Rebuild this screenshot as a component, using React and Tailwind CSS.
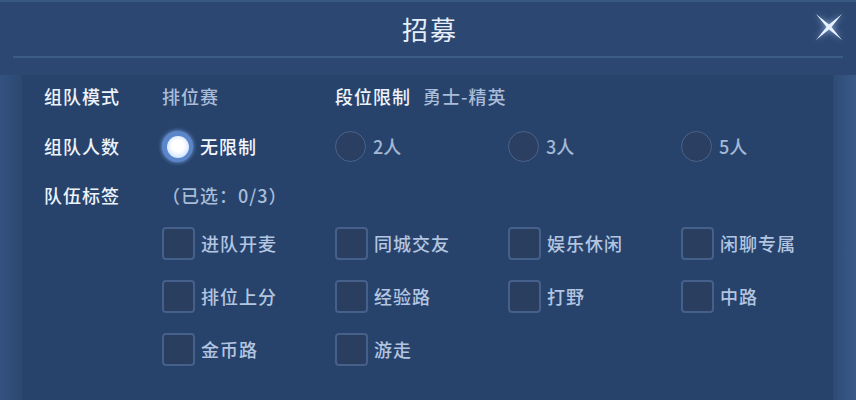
import { useState } from "react";

const tags = [
  ["进队开麦", "同城交友", "娱乐休闲", "闲聊专属"],
  ["排位上分", "经验路", "打野", "中路"],
  ["金币路", "游走"],
];

const sizes = ["无限制", "2人", "3人", "5人"];

function CloseStar() {
  // four-point glowing cross
  return (
    <svg width="30" height="30" viewBox="0 0 30 30" className="drop-shadow-[0_0_3px_rgba(180,210,255,0.8)]">
      <polygon points="2,2 15,12.5 28,2 17.5,15 28,28 15,17.5 2,28 12.5,15" fill="#e8f1ff" />
    </svg>
  );
}

function Radio({ checked }) {
  if (checked) {
    return (
      <span className="flex h-[31px] w-[31px] shrink-0 items-center justify-center rounded-full bg-[#5b86c9] shadow-[0_0_4px_#7aa6e6]">
        <span className="h-[22px] w-[22px] rounded-full bg-[radial-gradient(circle_at_50%_45%,#ffffff_35%,#cfe4ff_75%,#a9c9f2)]" />
      </span>
    );
  }
  return (
    <span className="h-[31px] w-[31px] shrink-0 rounded-full border border-[#4b6388] bg-[#2a3f62]" />
  );
}

export default function App() {
  const [size, setSize] = useState(0);
  const [picked, setPicked] = useState([]);

  const toggle = (t) =>
    setPicked((p) => (p.includes(t) ? p.filter((x) => x !== t) : p.length < 3 ? [...p, t] : p));

  return (
    <div
      className="flex h-[400px] w-[856px] flex-col overflow-hidden bg-[#2c4872] text-[18px] text-[#dfe8f6]"
      style={{ fontFamily: '"Noto Sans CJK SC", "Noto Sans", sans-serif' }}
    >
      {/* Header */}
      <div className="flex h-[56px] shrink-0 items-center border-t-2 border-[#3a5884] px-4">
        <div className="w-[30px]" />
        <h1 className="flex-1 text-center text-[26px] leading-none tracking-[2px] text-[#e6eefb]">招募</h1>
        <button className="-mr-1 mb-1 flex items-center">
          <CloseStar />
        </button>
      </div>

      {/* Divider */}
      <div className="mx-[13px] h-[2px] shrink-0 bg-[#3e5c88]" />

      {/* Body */}
      <div className="flex flex-1 pt-[17px]">
        <div className="w-[22px] shrink-0 bg-gradient-to-r from-[#33527f] to-[#2c4872]" />
        <div className="min-w-0 flex-1 overflow-hidden bg-[#27436c] pl-[22px] pt-[6px] font-medium">
          {/* Row: mode */}
          <div className="flex h-[30px] items-center">
            <span className="w-[118px] shrink-0 tracking-[1px] text-[#eef3fb]">组队模式</span>
            <span className="w-[173px] shrink-0 tracking-[1px] text-[#a9bcd8]">排位赛</span>
            <span className="w-[88px] shrink-0 tracking-[1px] text-[#eef3fb]">段位限制</span>
            <span className="tracking-[1px] text-[#a9bcd8]">勇士-精英</span>
          </div>

          {/* Row: size */}
          <div className="mt-[20px] flex h-[31px] items-center">
            <span className="w-[118px] shrink-0 tracking-[1px] text-[#eef3fb]">组队人数</span>
            {sizes.map((s, i) => (
              <button
                key={s}
                onClick={() => setSize(i)}
                className="flex w-[173px] shrink-0 items-center gap-[7px]"
              >
                <Radio checked={size === i} />
                <span className={size === i ? "tracking-[1px] text-[#f2f6fd]" : "text-[#a4b8d6]"}>{s}</span>
              </button>
            ))}
          </div>

          {/* Row: tags */}
          <div className="mt-[18px] flex h-[30px] items-center">
            <span className="w-[118px] shrink-0 tracking-[1px] text-[#eef3fb]">队伍标签</span>
            <span className="tracking-[1px] text-[#a9bcd8]">（已选：{picked.length}/3）</span>
          </div>

          <div className="mt-[17px] flex flex-col gap-[20px] pl-[118px]">
            {tags.map((row, r) => (
              <div key={r} className="flex">
                {row.map((t) => (
                  <button key={t} onClick={() => toggle(t)} className="flex w-[173px] shrink-0 items-center gap-[6px]">
                    <span
                      className={
                        "h-[33px] w-[33px] shrink-0 rounded-[4px] border-2 " +
                        (picked.includes(t) ? "border-[#8fb4ea] bg-[#4f77b3]" : "border-[#45608a] bg-[#2a3e60]")
                      }
                    />
                    <span className="tracking-[1px] text-[#b3c5e0]">{t}</span>
                  </button>
                ))}
              </div>
            ))}
          </div>
        </div>
        <div className="w-[23px] shrink-0 bg-gradient-to-r from-[#2e4b76] to-[#3a5a88]" />
      </div>
    </div>
  );
}
